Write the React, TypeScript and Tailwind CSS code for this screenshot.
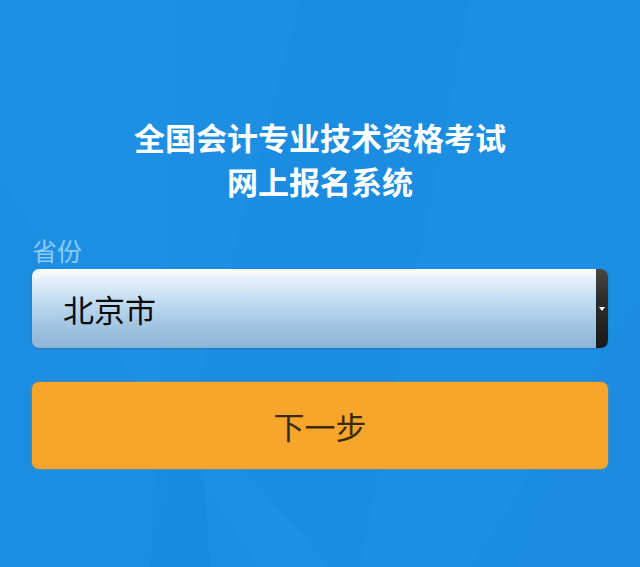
import React from "react";

export default function App() {
  const font = { fontFamily: '"Noto Sans CJK SC", "Noto Sans", sans-serif' };
  return (
    <div
      className="relative h-[567px] w-full overflow-hidden bg-[#1c8ee2]"
      style={font}
    >
      <svg
        className="absolute inset-0 h-full w-full"
        viewBox="0 0 640 567"
        preserveAspectRatio="none"
      >
        <polygon points="0,0 300,0 150,567 0,567" fill="#2a9cec" opacity="0.2" />
        <polygon points="180,0 470,0 360,567 150,567" fill="#1a86dc" opacity="0.2" />
        <polygon points="470,0 640,0 640,250 520,567 360,567" fill="#2496e8" opacity="0.2" />
        <polygon points="0,180 260,567 0,567" fill="#1580d8" opacity="0.2" />
        <polygon points="640,300 640,567 470,567" fill="#1a84dd" opacity="0.25" />
        <polygon points="200,420 330,567 210,567" fill="#27a0ee" opacity="0.2" />
      </svg>

      <div className="relative flex flex-col px-[32px] pt-[115px]">
        <div className="text-center text-[31px] font-bold leading-[44px] text-white">
          <div>全国会计专业技术资格考试</div>
          <div>网上报名系统</div>
        </div>

        <div className="mt-[32px] text-[25px] leading-[30px] text-[#8ccaf4]">
          省份
        </div>

        <div className="mt-[4px] flex h-[79px] overflow-hidden rounded-[7px] shadow-[0_1px_2px_rgba(0,0,0,0.15)]">
          <div className="flex flex-1 items-center bg-[linear-gradient(180deg,#ffffff_0%,#e2eff9_15%,#b8d6ee_48%,#9cc0de_78%,#8fb4d5_100%)] pl-[31px]">
            <span className="text-[31px] leading-none text-[#0b0b0b]">北京市</span>
          </div>
          <div className="flex w-[12px] items-center justify-center rounded-r-[7px] bg-[linear-gradient(180deg,#4a4642_0%,#2e2c2a_40%,#1a1a1a_100%)]">
            <div className="h-0 w-0 border-x-[3px] border-t-[4px] border-x-transparent border-t-white" />
          </div>
        </div>

        <div className="mt-[34px] flex h-[87px] items-center justify-center rounded-[7px] bg-[#f7a52b] shadow-[0_0_0_1px_rgba(180,140,60,0.35)]">
          <span className="text-[31px] leading-none text-[#3a2a10]">下一步</span>
        </div>
      </div>
    </div>
  );
}
